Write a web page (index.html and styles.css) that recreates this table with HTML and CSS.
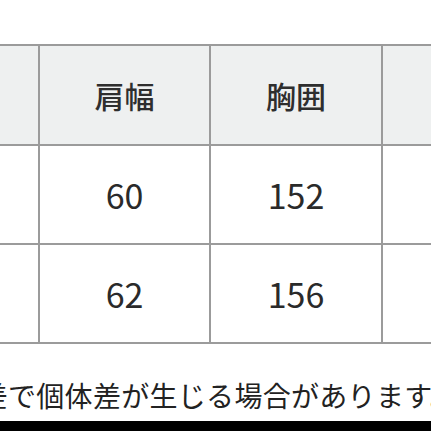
FILE: index.html
```html
<!DOCTYPE html>
<html lang="ja">
<head>
<meta charset="utf-8">
<link rel="stylesheet" href="styles.css">
</head>
<body>
<div class="page">
  <div class="spacer"></div>
  <div class="table">
    <div class="cell head"></div>
    <div class="cell head">肩幅</div>
    <div class="cell head">胸囲</div>
    <div class="cell head"></div>
    <div class="cell"></div>
    <div class="cell num">60</div>
    <div class="cell num">152</div>
    <div class="cell"></div>
    <div class="cell"></div>
    <div class="cell num">62</div>
    <div class="cell num">156</div>
    <div class="cell"></div>
  </div>
  <div class="note"><p class="note-text">誤差で個体差が生じる場合があります。</p></div>
  <div class="bar"></div>
</div>
</body>
</html>
```
FILE: styles.css
```css
html, body {
  margin: 0;
  padding: 0;
  background: #ffffff;
}
.page {
  width: 431px;
  height: 431px;
  overflow: hidden;
  display: flex;
  flex-direction: column;
  font-family: "Noto Sans CJK JP", "Noto Sans", sans-serif;
  color: #333333;
}
.spacer {
  height: 44px;
  flex: none;
}
.table {
  flex: none;
  display: grid;
  grid-template-columns: 38px 169px 170px 1fr;
  grid-template-rows: 98px 97px 97px;
  gap: 2px;
  padding: 2px 0;
  background: #9b9b9b;
}
.cell {
  background: #ffffff;
  display: flex;
  align-items: center;
  justify-content: center;
}
.head {
  background: #eef0f0;
  font-size: 30px;
  font-weight: 500;
  color: #2e2e2e;
}
.num {
  font-size: 34px;
  color: #2a2a2a;
}
.note {
  flex: none;
  height: 77px;
  overflow: hidden;
}
.note-text {
  margin: 0;
  padding-top: 31px;
  line-height: 40px;
  font-size: 28px;
  letter-spacing: 0.3px;
  white-space: nowrap;
  text-indent: -48.6px;
  color: #222222;
}
.bar {
  flex: 1;
  background: #000000;
}
```
